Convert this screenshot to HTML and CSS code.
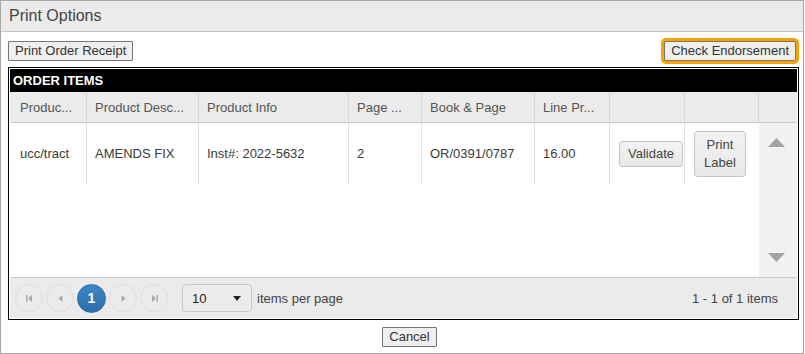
FILE: index.html
```html
<!DOCTYPE html>
<html lang="en">
<head>
  <meta charset="UTF-8">
  <title>Print Options</title>
  <link rel="stylesheet" href="styles.css">
</head>
<body>

  <div class="window">
    <div class="titlebar">Print Options</div>

    <div class="window-body">
      <div class="toolbar">
        <button class="btn" type="button">Print Order Receipt</button>
        <button class="btn btn-focus" type="button">Check Endorsement</button>
      </div>

      <div class="grid">
        <div class="grid-caption">ORDER ITEMS</div>

        <div class="grid-header">
          <div class="th first">Produc...</div>
          <div class="th">Product Desc...</div>
          <div class="th">Product Info</div>
          <div class="th">Page ...</div>
          <div class="th">Book &amp; Page</div>
          <div class="th">Line Pr...</div>
          <div class="th"></div>
          <div class="th"></div>
          <div class="th"></div>
        </div>

        <div class="grid-content">
          <div class="rows">
            <div class="row">
              <div class="td first">ucc/tract</div>
              <div class="td">AMENDS FIX</div>
              <div class="td">Inst#: 2022-5632</div>
              <div class="td">2</div>
              <div class="td">OR/0391/0787</div>
              <div class="td">16.00</div>
              <div class="td cmd"><button class="k-btn" type="button">Validate</button></div>
              <div class="td cmd"><button class="k-btn k-btn-tall" type="button">Print<br>Label</button></div>
            </div>
          </div>
          <div class="scrollbar">
            <svg width="17" height="9" viewBox="0 0 17 9"><polygon points="8.5,0 17,9 0,9" fill="#a3a3a3"/></svg>
            <svg width="17" height="9" viewBox="0 0 17 9"><polygon points="0,0 17,0 8.5,9" fill="#a3a3a3"/></svg>
          </div>
        </div>

        <div class="pager">
          <span class="page-btn">
            <svg width="7" height="7" viewBox="0 0 7 7"><rect x="0" y="0" width="1.5" height="7" fill="#aaa"/><polygon points="6,0 6,7 2,3.5" fill="#aaa"/></svg>
          </span>
          <span class="page-btn">
            <svg width="5" height="7" viewBox="0 0 5 7"><polygon points="4.5,0 4.5,7 0.5,3.5" fill="#aaa"/></svg>
          </span>
          <span class="page-btn current">1</span>
          <span class="page-btn">
            <svg width="5" height="7" viewBox="0 0 5 7"><polygon points="0.5,0 0.5,7 4.5,3.5" fill="#aaa"/></svg>
          </span>
          <span class="page-btn">
            <svg width="7" height="7" viewBox="0 0 7 7"><polygon points="1,0 1,7 5,3.5" fill="#aaa"/><rect x="5.5" y="0" width="1.5" height="7" fill="#aaa"/></svg>
          </span>

          <span class="page-size">
            <span>10</span>
            <svg width="8" height="5" viewBox="0 0 8 5"><polygon points="0,0 8,0 4,5" fill="#222"/></svg>
          </span>
          <span class="page-label">items per page</span>

          <span class="pager-info">1 - 1 of 1 items</span>
        </div>
      </div>

      <div class="footer">
        <button class="btn" type="button">Cancel</button>
      </div>
    </div>
  </div>

</body>
</html>
```

FILE: styles.css
```css
body {
  font-family: "Liberation Sans", Arial, sans-serif;
  font-size: 13px;
  color: #333;
  background: white;
  margin: 0;
  padding: 0;
}

.window {
  width: 802px;
  height: 352px;
  border: 1px solid #a8a8a8;
}

.titlebar {
  height: 30px;
  line-height: 30px;
  background: #ebebeb;
  border-bottom: 1px solid #c4c4c4;
  padding-left: 8px;
  font-size: 16px;
  color: #444;
}

.window-body {
  padding: 9px 4px 6px 7px;
}

.toolbar {
  display: flex;
  justify-content: space-between;
  align-items: center;
  height: 20px;
}

.btn {
  font-family: "Liberation Sans", Arial, sans-serif;
  font-size: 13px;
  color: #333;
  background: #efefef;
  border: 1px solid #767676;
  border-radius: 1px;
  padding: 0 6px;
  height: 20px;
  line-height: 18px;
  margin: 0;
}

.btn-focus {
  margin-right: 3px;
  border-radius: 2px;
  box-shadow: 0 0 0 3px #f6a500;
}

.grid {
  margin-top: 6px;
  border: 1px solid #000;
  padding: 1px;
}

.grid-caption {
  background: #000;
  color: white;
  font-weight: bold;
  height: 23px;
  line-height: 23px;
  padding-left: 3px;
}

.grid-header,
.row {
  display: grid;
  grid-template-columns: 76px 112px 150px 73px 113px 75px 75px 74px;
}

.grid-header {
  grid-template-columns: 76px 112px 150px 73px 113px 75px 75px 74px 38px;
  background: #ebebeb;
  border-bottom: 1px solid #c9c9c9;
}

.th,
.td {
  box-sizing: border-box;
  border-left: 1px solid #d8d8d8;
  padding: 0 8px;
  white-space: nowrap;
  overflow: hidden;
  display: flex;
  align-items: center;
}

.th {
  height: 30px;
  color: #555;
}

.td {
  height: 61px;
  color: #3a3a3a;
  border-left-color: #e0e0e0;
}

.th.first,
.td.first {
  border-left: none;
  padding-left: 10px;
}

.td.cmd {
  padding-left: 9px;
}

.grid-content {
  display: flex;
  height: 154px;
  background: white;
}

.rows {
  flex: 1;
}

.scrollbar {
  width: 38px;
  background: #f1f1f1;
  display: flex;
  flex-direction: column;
  justify-content: space-between;
  padding: 15px 0 15px 9px;
  box-sizing: border-box;
}

.k-btn {
  font-family: "Liberation Sans", Arial, sans-serif;
  font-size: 13px;
  color: #444;
  background: linear-gradient(#f3f3f3, #e8e8e8);
  border: 1px solid #c5c5c5;
  border-radius: 3px;
  padding: 0 8px;
  height: 26px;
  margin: 0;
}

.k-btn-tall {
  height: 46px;
  line-height: 18px;
  padding: 4px 9px;
}

.pager {
  display: flex;
  align-items: center;
  height: 40px;
  background: #ebebeb;
  border-top: 1px solid #c9c9c9;
  padding-left: 5px;
}

.page-btn {
  width: 28px;
  height: 28px;
  box-sizing: border-box;
  border: 1px solid #dedede;
  border-radius: 50%;
  margin-right: 3px;
  display: flex;
  align-items: center;
  justify-content: center;
}

.page-btn.current {
  width: 29px;
  height: 29px;
  background: linear-gradient(#3f87c7, #2c6ca9);
  border-color: #2c6aa5;
  color: white;
  font-weight: bold;
  font-size: 14px;
}

.page-size {
  margin-left: 11px;
  width: 70px;
  height: 28px;
  box-sizing: border-box;
  border: 1px solid #c9c9c9;
  border-radius: 4px;
  background: #ececec;
  display: flex;
  align-items: center;
  justify-content: space-between;
  padding: 0 10px 0 9px;
  color: #222;
}

.page-label {
  margin-left: 5px;
  color: #444;
}

.pager-info {
  margin-left: auto;
  padding-right: 19px;
  color: #444;
}

.footer {
  margin-top: 7px;
  display: flex;
  justify-content: center;
  padding-left: 12px;
}
```
